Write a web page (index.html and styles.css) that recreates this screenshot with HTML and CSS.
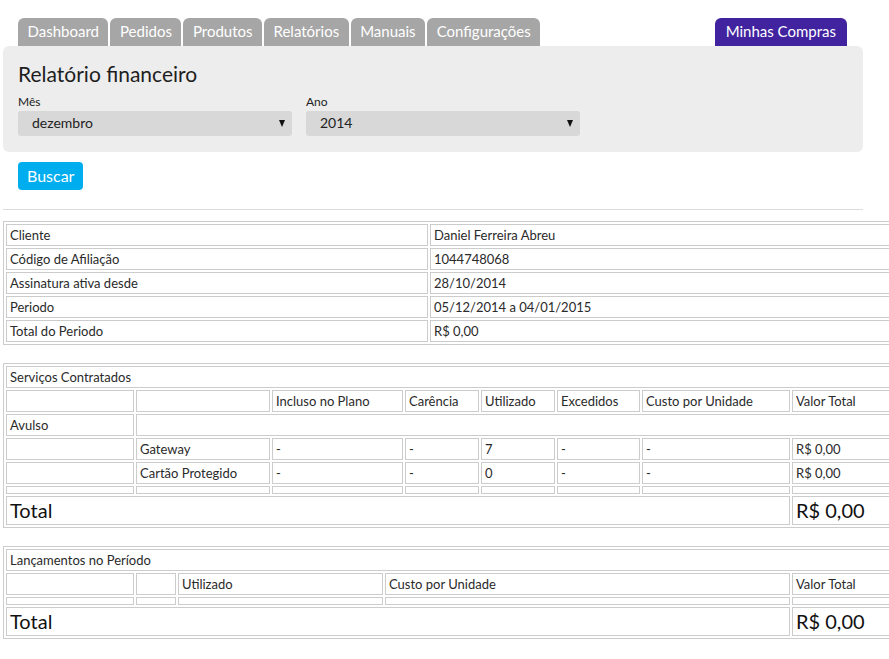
FILE: index.html
```html
<!DOCTYPE html>
<html lang="pt">
<head>
<meta charset="utf-8">
<title>Relatório financeiro</title>
<link rel="stylesheet" href="styles.css">
</head>
<body>
<div class="page">
  <nav class="tabs">
    <a class="tab">Dashboard</a>
    <a class="tab">Pedidos</a>
    <a class="tab">Produtos</a>
    <a class="tab">Relatórios</a>
    <a class="tab">Manuais</a>
    <a class="tab">Configurações</a>
    <a class="tab tab-right">Minhas Compras</a>
  </nav>
  <section class="panel">
    <h1 class="title">Relatório financeiro</h1>
    <div class="fields">
      <div class="field">
        <label class="label">Mês</label>
        <div class="select"><span>dezembro</span><i class="arrow"></i></div>
      </div>
      <div class="field">
        <label class="label">Ano</label>
        <div class="select"><span>2014</span><i class="arrow"></i></div>
      </div>
    </div>
  </section>
  <div class="actions"><button class="btn">Buscar</button></div>
  <hr class="sep">

  <table class="grid">
    <colgroup><col class="w421"><col></colgroup>
    <tr><td>Cliente</td><td>Daniel Ferreira Abreu</td></tr>
    <tr><td>Código de Afiliação</td><td>1044748068</td></tr>
    <tr><td>Assinatura ativa desde</td><td>28/10/2014</td></tr>
    <tr><td>Periodo</td><td>05/12/2014 a 04/01/2015</td></tr>
    <tr><td>Total do Periodo</td><td>R$ 0,00</td></tr>
  </table>

  <table class="grid">
    <colgroup>
      <col class="w128"><col class="w134"><col class="w132"><col class="w73"><col class="w74"><col class="w83"><col class="w148"><col>
    </colgroup>
    <tr><td colspan="8">Serviços Contratados</td></tr>
    <tr><td></td><td></td><td>Incluso no Plano</td><td>Carência</td><td>Utilizado</td><td>Excedidos</td><td>Custo por Unidade</td><td>Valor Total</td></tr>
    <tr><td>Avulso</td><td colspan="7"></td></tr>
    <tr><td></td><td>Gateway</td><td>-</td><td>-</td><td>7</td><td>-</td><td>-</td><td>R$ 0,00</td></tr>
    <tr><td></td><td>Cartão Protegido</td><td>-</td><td>-</td><td>0</td><td>-</td><td>-</td><td>R$ 0,00</td></tr>
    <tr class="empty"><td></td><td></td><td></td><td></td><td></td><td></td><td></td><td></td></tr>
    <tr class="total"><td colspan="7">Total</td><td>R$ 0,00</td></tr>
  </table>

  <table class="grid">
    <colgroup>
      <col class="w128"><col class="w40"><col class="w205"><col class="w405"><col>
    </colgroup>
    <tr><td colspan="5">Lançamentos no Período</td></tr>
    <tr><td></td><td></td><td>Utilizado</td><td>Custo por Unidade</td><td>Valor Total</td></tr>
    <tr class="empty"><td></td><td></td><td></td><td></td><td></td></tr>
    <tr class="total"><td colspan="4">Total</td><td>R$ 0,00</td></tr>
  </table>
</div>
</body>
</html>
```

FILE: styles.css
```css
html { overflow-x: hidden; }
body {
  margin: 0;
  font-family: Lato, "Open Sans", sans-serif;
  color: #222;
  background: #fff;
}
.page {
  padding: 18px 0 0 3px;
}
.tabs {
  display: flex;
  gap: 2px;
  width: 860px;
  padding-left: 15px;
  box-sizing: border-box;
}
.tab {
  display: block;
  height: 28px;
  line-height: 27px;
  padding: 0 9.5px;
  background: #a6a6a6;
  color: #fff;
  font-size: 15px;
  border-radius: 6px 6px 0 0;
}
.tab-right {
  margin-left: auto;
  margin-right: 16px;
  background: #41239f;
  padding: 0 11px;
}
.panel {
  width: 860px;
  box-sizing: border-box;
  background: #ededed;
  border-radius: 6px;
  padding: 16px 15px 16px;
}
.title {
  margin: 0 0 8px;
  font-size: 21px;
  font-weight: 400;
  line-height: 24px;
  color: #1e1e1e;
}
.fields {
  display: flex;
  gap: 14px;
}
.field {
  display: flex;
  flex-direction: column;
  width: 274px;
}
.label {
  font-size: 12px;
  line-height: 16px;
  color: #222;
  margin-bottom: 1px;
}
.select {
  position: relative;
  height: 25px;
  line-height: 24px;
  background: #d8d8d8;
  border-radius: 3px;
  padding-left: 14px;
  font-size: 14px;
  color: #222;
}
.arrow {
  position: absolute;
  right: 7px;
  top: 9px;
  width: 0;
  height: 0;
  border-left: 3.5px solid transparent;
  border-right: 3.5px solid transparent;
  border-top: 7px solid #111;
}
.actions {
  padding: 10px 15px 0;
}
.btn {
  display: block;
  height: 28px;
  padding: 0 9px;
  border: 0;
  border-radius: 4px;
  background: #00adef;
  color: #fff;
  font-family: inherit;
  font-size: 16px;
  line-height: 26px;
}
.sep {
  width: 860px;
  margin: 19px 0 11px;
  border: 0;
  border-top: 1px solid #dcdcdc;
  height: 0;
  box-sizing: border-box;
}
.grid {
  width: 1000px;
  table-layout: fixed;
  border-collapse: separate;
  border-spacing: 2px;
  border: 1px solid #cccccc;
  margin-bottom: 18px;
  font-size: 13px;
  color: #2a2a2a;
}
.grid td {
  border: 1px solid #cccccc;
  padding: 3px 3px;
  height: 14px;
  line-height: 14px;
  white-space: nowrap;
  overflow: hidden;
}
.grid .empty td {
  height: 0;
  padding: 3px;
  line-height: 0;
}
.grid .total td {
  font-size: 20px;
  line-height: 21px;
  height: 21px;
  padding: 3px 3px;
  color: #111;
}
.w421 { width: 422px; }
.w128 { width: 128px; }
.w134 { width: 134px; }
.w132 { width: 131px; }
.w73 { width: 74px; }
.w74 { width: 74px; }
.w83 { width: 83px; }
.w148 { width: 148px; }
.w40 { width: 40px; }
.w205 { width: 205px; }
.w405 { width: 405px; }
```
